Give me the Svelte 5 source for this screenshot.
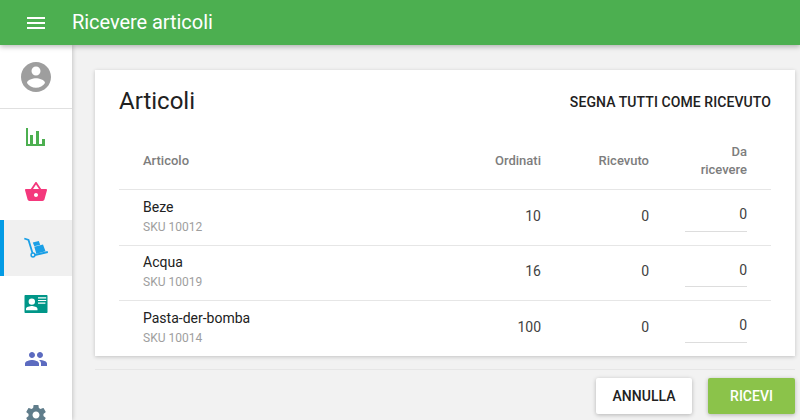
<script>
	// Goods receiving screen: top bar, icon rail, items card and action buttons.
	const items = [
		{ name: 'Beze', sku: 'SKU 10012', ordered: 10, received: 0, todo: 0 },
		{ name: 'Acqua', sku: 'SKU 10019', ordered: 16, received: 0, todo: 0 },
		{ name: 'Pasta-der-bomba', sku: 'SKU 10014', ordered: 100, received: 0, todo: 0 }
	];
</script>

<div class="page">
	<header class="bar">
		<svg class="menu" viewBox="0 0 24 24"><path d="M3 18h18v-2H3v2zm0-5h18v-2H3v2zm0-7v2h18V6H3z" /></svg>
		<h1>Ricevere articoli</h1>
	</header>

	<div class="body">
		<nav class="rail">
			<div class="avatar">
				<svg viewBox="0 0 24 24"><path fill="#9e9e9e" d="M12 2C6.48 2 2 6.48 2 12s4.48 10 10 10 10-4.48 10-10S17.52 2 12 2zm0 3c1.66 0 3 1.34 3 3s-1.34 3-3 3-3-1.34-3-3 1.34-3 3-3zm0 14.2c-2.5 0-4.71-1.28-6-3.22.03-1.99 4-3.08 6-3.08 1.99 0 5.97 1.09 6 3.08-1.29 1.94-3.5 3.22-6 3.22z" /></svg>
			</div>
			<div class="item">
				<svg viewBox="0 -1 24 24"><path fill="#4caf50" d="M2 2h2v16h2V9h3v9h3V5h3v13h3v-5h3v7H2z" /></svg>
			</div>
			<div class="item">
				<svg viewBox="0 0 24 24"><path fill="#f4387c" d="M17.21 9l-4.38-6.56c-.19-.28-.51-.42-.83-.42-.32 0-.64.14-.83.43L6.79 9H2c-.55 0-1 .45-1 1 0 .09.01.18.04.27l2.54 9.27c.23.84 1 1.46 1.92 1.46h13c.92 0 1.69-.62 1.93-1.46l2.54-9.27L23 10c0-.55-.45-1-1-1h-4.79zM9 9l3-4.4L15 9H9zm3 8c-1.1 0-2-.9-2-2s.9-2 2-2 2 .9 2 2-.9 2-2 2z" /></svg>
			</div>
			<div class="item active">
				<svg viewBox="0 -1 24 24">
					<path fill="none" stroke="#1a9fe6" stroke-width="1.800" d="M0.300 1.500L4.500 3L8.500 16M11 18L23.800 15" />
					<circle cx="9" cy="18" r="1.900" fill="none" stroke="#1a9fe6" stroke-width="1.500" />
					<path fill="#1a9fe6" d="M10.300 9.800l8.700-2.300 2.500 6.700-9.200 2.500zM8.800 5.600L14.800 4 16.200 7.700l-5.900 1.600z" />
				</svg>
			</div>
			<div class="item">
				<svg viewBox="0 0 24 24"><path fill="#009688" d="M1.500 3h21c.600 0 1 .4 1 1v16c0 .6-.4 1-1 1h-21c-.6 0-1-.4-1-1V4c0-.6.4-1 1-1zm6.300 3.400a3.200 3.200 0 1 0 0 6.400 3.200 3.200 0 0 0 0-6.400zM2 18.200h11.500V17c0-2-3.900-2.900-5.700-2.900S2 15 2 17v1.200zM14 5.200v1.200h8.200V5.200H14zm0 2.700v1.200h8.200V7.900H14zm0 2.700v1.200h7.400v-1.200H14z" /></svg>
			</div>
			<div class="item">
				<svg viewBox="0 0 24 24"><path fill="#5c6bc0" d="M16 11c1.660 0 2.990-1.340 2.990-3S17.660 5 16 5c-1.660 0-3 1.340-3 3s1.340 3 3 3zm-8 0c1.660 0 2.990-1.340 2.990-3S9.660 5 8 5C6.340 5 5 6.340 5 8s1.340 3 3 3zm0 2c-2.330 0-7 1.170-7 3.500V19h14v-2.500c0-2.330-4.670-3.500-7-3.500zm8 0c-.29 0-.62.02-.97.05 1.160.84 1.970 1.970 1.970 3.450V19h6v-2.500c0-2.330-4.670-3.500-7-3.500z" /></svg>
			</div>
			<div class="item">
				<svg viewBox="0 0 24 24"><path fill="#607d8b" d="M19.430 12.980c.04-.32.07-.64.07-.98s-.03-.66-.07-.98l2.110-1.650c.19-.15.24-.42.12-.64l-2-3.460c-.12-.22-.39-.3-.61-.22l-2.490 1c-.52-.4-1.080-.73-1.690-.98l-.38-2.650C14.460 2.180 14.250 2 14 2h-4c-.25 0-.46.18-.49.42l-.38 2.650c-.61.25-1.170.59-1.690.98l-2.490-1c-.23-.09-.49 0-.61.22l-2 3.460c-.13.22-.07.49.12.64l2.110 1.650c-.04.32-.07.65-.07.98s.03.66.07.98l-2.110 1.650c-.19.15-.24.42-.12.64l2 3.460c.12.22.39.3.61.22l2.490-1c.52.4 1.080.73 1.690.98l.38 2.650c.03.24.24.42.49.42h4c.25 0 .46-.18.49-.42l.38-2.650c.61-.25 1.170-.59 1.690-.98l2.490 1c.23.09.49 0 .61-.22l2-3.460c.12-.22.07-.49-.12-.64l-2.110-1.650zM12 15.500c-1.930 0-3.500-1.570-3.500-3.500s1.570-3.500 3.500-3.500 3.500 1.570 3.500 3.500-1.570 3.500-3.500 3.500z" /></svg>
			</div>
		</nav>

		<main class="content">
			<section class="card">
				<div class="head">
					<h2>Articoli</h2>
					<span class="mark">SEGNA TUTTI COME RICEVUTO</span>
				</div>
				<div class="row titles">
					<span class="name">Articolo</span>
					<span class="num">Ordinati</span>
					<span class="num">Ricevuto</span>
					<span class="todo">Da<br />ricevere</span>
				</div>
				{#each items as it}
					<div class="row line">
						<div class="name">
							<div class="t">{it.name}</div>
							<div class="s">{it.sku}</div>
						</div>
						<span class="num val">{it.ordered}</span>
						<span class="num val">{it.received}</span>
						<div class="todo"><div class="input">{it.todo}</div></div>
					</div>
				{/each}
			</section>
			<footer class="actions">
				<button class="cancel">ANNULLA</button>
				<button class="ok">RICEVI</button>
			</footer>
		</main>
	</div>
</div>

<style>
	:global(body) { margin: 0; background: #f2f2f2; font-family: Roboto, sans-serif; overflow: hidden; }
	.page { height: 420px; overflow: hidden; display: flex; flex-direction: column; }
	.bar {
		flex: 0 0 45px; height: 45px; background: #4caf50; color: #fff; display: flex; align-items: center;
		box-shadow: 0 2px 5px rgba(0, 0, 0, 0.26); position: relative; z-index: 2;
	}
	.menu { width: 24px; height: 24px; fill: #fff; margin-left: 24px; }
	h1 { margin: 0 0 2px 24px; font-size: 20px; font-weight: 400; letter-spacing: -0.05px; }
	.body { flex: 1; display: flex; min-height: 0; }
	.rail {
		width: 72px; flex: 0 0 72px; background: #fff; box-shadow: 1px 0 4px rgba(0, 0, 0, 0.18);
		position: relative; z-index: 1;
	}
	.avatar { height: 63px; display: flex; align-items: center; justify-content: center; border-bottom: 1px solid #e0e0e0; }
	.avatar svg { width: 36px; height: 36px; }
	.item { height: 55.67px; display: flex; align-items: center; justify-content: center; box-sizing: border-box; }
	.item svg { width: 24px; height: 24px; }
	.item.active { background: #f0f0f0; border-left: 4px solid #039be5; padding-right: 4px; }
	.content { flex: 1; padding: 25px 5px 0 23px; min-width: 0; }
	.card {
		background: #fff; height: 286px; padding: 0 24px; box-sizing: border-box;
		box-shadow: 0 1px 4px rgba(0, 0, 0, 0.2);
	}
	.head { height: 63px; display: flex; align-items: center; justify-content: space-between; }
	h2 { margin: 0 0 2px; font-size: 24px; font-weight: 400; color: #212121; }
	.mark { font-size: 14px; font-weight: 500; color: #212121; letter-spacing: 0.08px; }
	.row { display: flex; align-items: center; padding: 0 24px; }
	.titles { height: 56px; font-size: 13px; font-weight: 500; color: #7d7d7d; line-height: 18px; border-bottom: 1px solid #e6e6e6; }
	.line { height: 54.67px; border-bottom: 1px solid #e6e6e6; font-size: 14px; color: #212121; }
	.line:last-child { border-bottom: 0; }
	.name { flex: 1; min-width: 0; }
	.line .name { padding-bottom: 2px; }
	.num { width: 108px; text-align: right; }
	.val { color: #424242; padding-bottom: 3px; }
	.todo { width: 62px; margin-left: 36px; text-align: right; }
	.line .todo { align-self: flex-start; }
	.t { font-size: 14px; line-height: 20px; color: #212121; }
	.s { font-size: 12px; line-height: 18px; margin-top: 1px; color: #9e9e9e; }
	.input { height: 31.5px; margin-top: 10px; box-sizing: border-box; border-bottom: 1px solid #ddd; line-height: 28px; color: #424242; }
	.actions { margin-top: 13px; border-top: 1px solid #e6e6e6; padding-top: 8px; display: flex; justify-content: flex-end; gap: 16px; }
	button {
		height: 36px; border: 0; border-radius: 2px; font-family: inherit; font-size: 14px; font-weight: 500;
		box-shadow: 0 1px 4px rgba(0, 0, 0, 0.26); cursor: pointer;
	}
	.cancel { width: 96px; background: #fff; color: #212121; }
	.ok { width: 87px; background: #8bc34a; color: #fff; }
</style>
